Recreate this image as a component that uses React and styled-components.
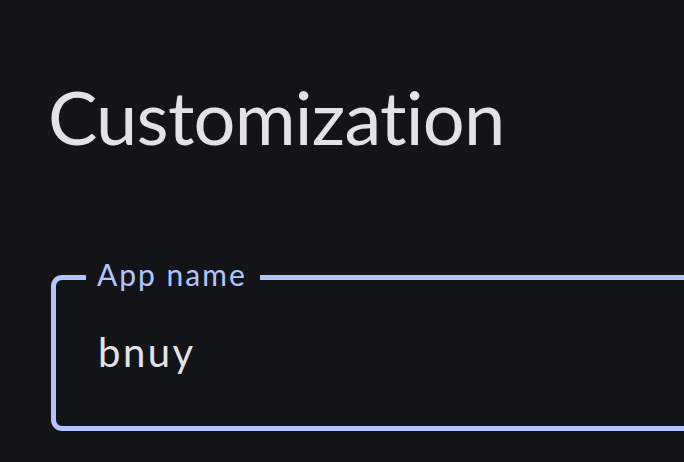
import React from "react";
import styled, { createGlobalStyle } from "styled-components";

const GlobalStyle = createGlobalStyle`
  html, body {
    margin: 0;
    padding: 0;
    background: #131418;
    overflow: hidden;
  }
  body {
    font-family: Lato, "Noto Sans", sans-serif;
    color: #e3e2e6;
  }
`;

const Page = styled.div`
  width: 684px;
  height: 462px;
  padding: 72px 0 0 48px;
  box-sizing: border-box;
  overflow: hidden;
`;

const Title = styled.h1`
  margin: 0;
  font-size: 74px;
  font-weight: 400;
  line-height: 90px;
  letter-spacing: -0.75px;
  color: #e3e2e6;
`;

const Field = styled.fieldset`
  margin: 97px 0 0 3px;
  width: 720px;
  height: 172px;
  box-sizing: border-box;
  border: 5px solid #b3c5ff;
  border-radius: 11px;
  padding: 0;
  display: flex;
  align-items: center;
`;

const Label = styled.legend`
  margin-left: 30px;
  padding: 0 13px 6px 11px;
  font-size: 30px;
  line-height: 30px;
  letter-spacing: 2px;
  color: #b3c5ff;
`;

const Value = styled.div`
  margin: -18px 0 0 42px;
  font-size: 40px;
  line-height: 48px;
  letter-spacing: 2.5px;
  color: #e3e2e6;
`;

export default function App() {
  return (
    <>
      <GlobalStyle />
      <Page>
        <Title>Customization</Title>
        <Field>
          <Label>App name</Label>
          <Value>bnuy</Value>
        </Field>
      </Page>
    </>
  );
}
